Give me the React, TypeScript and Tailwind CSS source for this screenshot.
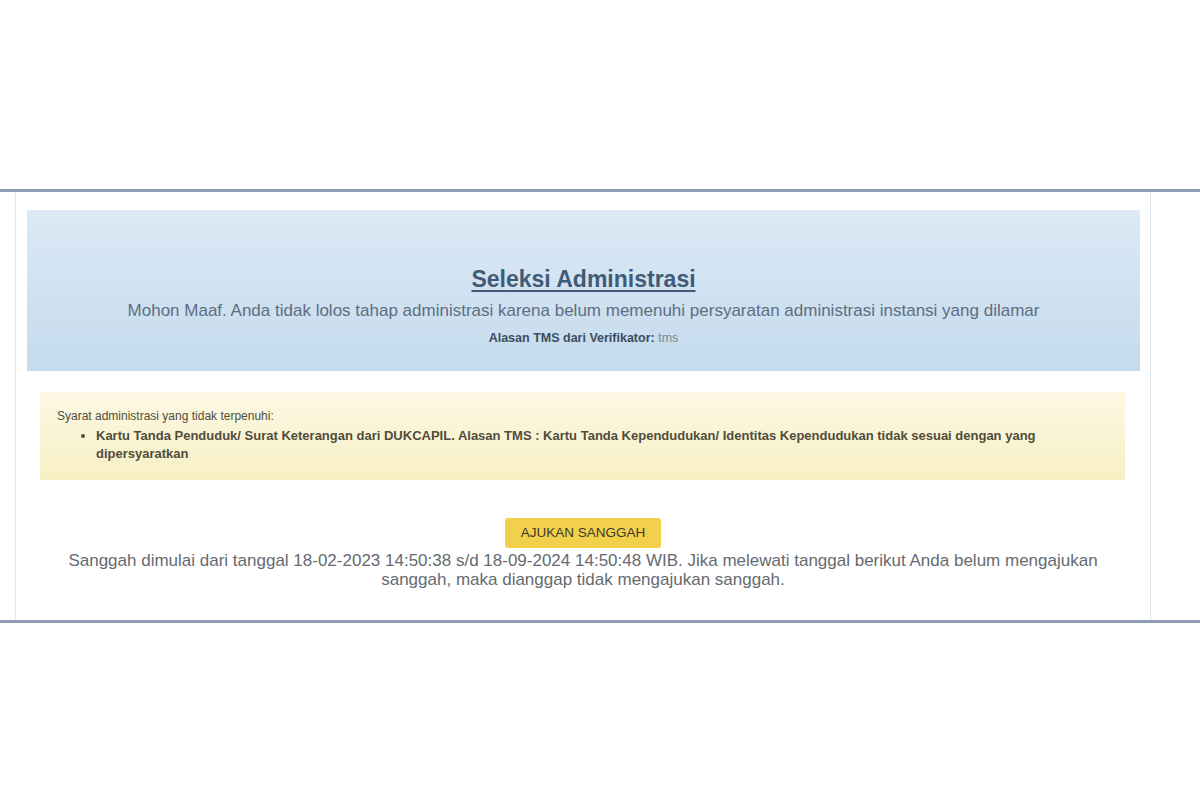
export default function App() {
  return (
    <div className="min-h-screen bg-white pt-[189px] font-['Liberation_Sans',Arial,sans-serif]">
      <div className="border-y-[3px] border-[#8d9db2]">
        <div className="ml-[15px] w-[1136px] border-x border-[#e3e8ee] bg-white pt-[18px] pb-[31px]">
          <div className="ml-[11px] mr-[10px] h-[161px] bg-gradient-to-b from-[#dce9f5] to-[#c4dbed] pt-[55px] text-center">
            <h3 className="text-[23px] font-bold leading-[28px] text-[#3f5b77] underline underline-offset-[3px]">
              Seleksi Administrasi
            </h3>
            <p className="mt-[7px] text-[17px] leading-[22px] text-[#5d6e80]">
              Mohon Maaf. Anda tidak lolos tahap administrasi karena belum memenuhi persyaratan administrasi instansi yang dilamar
            </p>
            <p className="mt-[8px] text-[12.5px] leading-[16px] text-[#3c4d5f]">
              <span className="font-bold">Alasan TMS dari Verifikator:</span> <span className="text-[#7b8a99]">tms</span>
            </p>
          </div>

          <div className="mt-[21px] ml-[24px] mr-[25px] h-[88px] bg-gradient-to-b from-[#fcf8e4] to-[#f8efc4] pt-[15px] pl-[17px] pr-[20px] leading-[18px] text-[#4f4d3c]">
            <p className="text-[12px]">Syarat administrasi yang tidak terpenuhi:</p>
            <ul className="mt-[2px] list-disc pl-[39px] text-[13px] font-bold">
              <li>
                Kartu Tanda Penduduk/ Surat Keterangan dari DUKCAPIL. Alasan TMS : Kartu Tanda Kependudukan/ Identitas Kependudukan tidak sesuai dengan yang dipersyaratkan
              </li>
            </ul>
          </div>

          <div className="mt-[38px] flex flex-col items-center">
            <button className="h-[30px] w-[156px] rounded-[3px] bg-[#f2d04c] text-[13.5px] leading-[30px] text-[#3d3a2a]">
              AJUKAN SANGGAH
            </button>
            <p className="mt-[3px] text-center text-[17px] leading-[19px] text-[#666a70]">
              Sanggah dimulai dari tanggal 18-02-2023 14:50:38 s/d 18-09-2024 14:50:48 WIB. Jika melewati tanggal berikut Anda belum mengajukan
              <br />
              sanggah, maka dianggap tidak mengajukan sanggah.
            </p>
          </div>
        </div>
      </div>
    </div>
  );
}
